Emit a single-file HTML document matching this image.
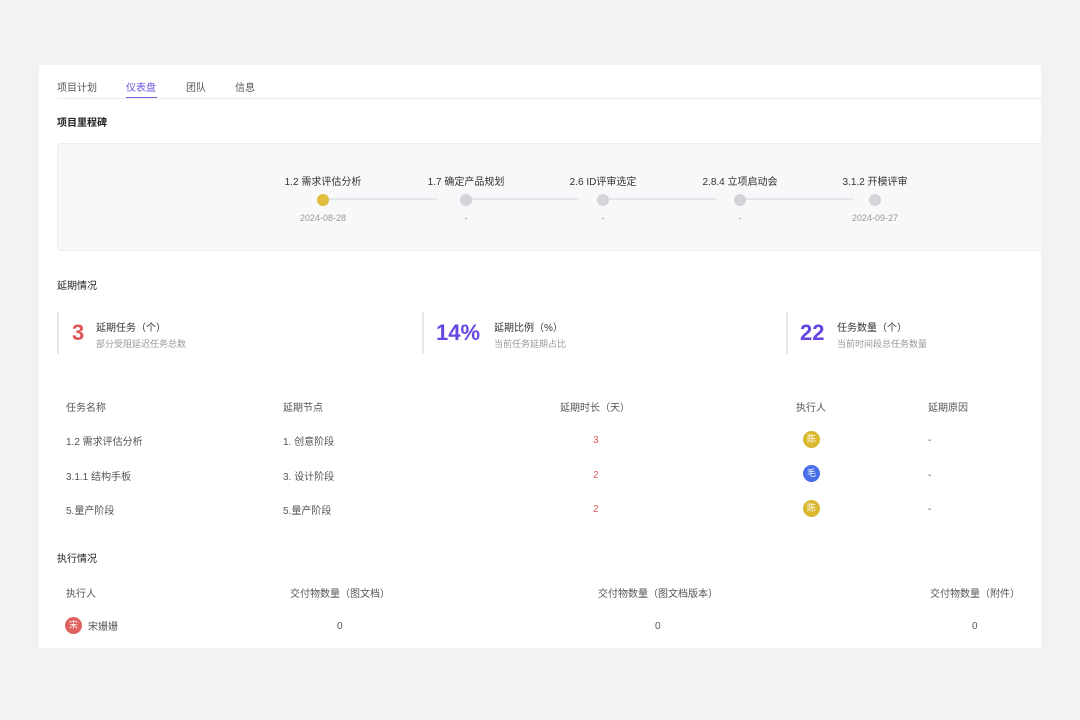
<!DOCTYPE html>
<html><head><meta charset="utf-8"><style>
*{margin:0;padding:0;box-sizing:border-box}
body{width:1080px;height:720px;background:#f2f2f4;font-family:"Liberation Sans","Noto Sans CJK SC",sans-serif;position:relative;overflow:hidden;color:#333}
.card{position:absolute;left:39px;top:65px;width:1002px;height:583px;background:#fff}
.a{position:absolute;white-space:nowrap}
.c{transform:translateX(-50%)}
.f11{font-size:11px}.f10{font-size:10px}.f9{font-size:9px}
.g{color:#999}.dk{color:#555}
.dot{position:absolute;width:12px;height:12px;border-radius:50%;background:#d4d4d8;top:194px}
.line{position:absolute;height:2px;background:#e6e6ea;top:198px}
.bar{position:absolute;width:2px;height:42px;background:#e8e8ec;top:312px}
.num{position:absolute;font-weight:bold;font-size:22px;top:320px}
.av{position:absolute;width:17px;height:17px;border-radius:50%;color:#fff;font-size:9px;text-align:center;line-height:17px}
</style></head><body>
<div class="card"></div>
<div class="a f10 dk" style="left:57px;top:79px">项目计划</div>
<div class="a f10" style="left:126px;top:79px;color:#6a55d8">仪表盘</div>
<div style="position:absolute;left:126px;top:97px;width:31px;height:2px;background:#7a66e0"></div>
<div class="a f10 dk" style="left:186px;top:79px">团队</div>
<div class="a f10 dk" style="left:235px;top:79px">信息</div>
<div style="position:absolute;left:57px;top:98px;width:984px;height:1px;background:#ececf0"></div>
<div class="a f10" style="left:57px;top:114px;font-weight:bold;color:#222">项目里程碑</div>
<div style="position:absolute;left:57px;top:143px;width:984px;height:108px;background:#f8f8fa;border:1px solid #ededf1;border-right:none;border-radius:4px 0 0 4px"></div>
<div class="line" style="left:329px;width:108px"></div>
<div class="line" style="left:472px;width:107px"></div>
<div class="line" style="left:609px;width:107px"></div>
<div class="line" style="left:746px;width:107px"></div>
<div class="dot" style="left:317px;background:#e0bd3c"></div>
<div class="dot" style="left:460px"></div>
<div class="dot" style="left:597px"></div>
<div class="dot" style="left:734px"></div>
<div class="dot" style="left:869px"></div>
<div class="a f10 c" style="left:323px;top:173px">1.2 需求评估分析</div>
<div class="a f10 c" style="left:466px;top:173px">1.7 确定产品规划</div>
<div class="a f10 c" style="left:603px;top:173px">2.6 ID评审选定</div>
<div class="a f10 c" style="left:740px;top:173px">2.8.4 立项启动会</div>
<div class="a f10 c" style="left:875px;top:173px">3.1.2 开模评审</div>
<div class="a f9 c g" style="left:323px;top:213px">2024-08-28</div>
<div class="a f9 c g" style="left:466px;top:213px">-</div>
<div class="a f9 c g" style="left:603px;top:213px">-</div>
<div class="a f9 c g" style="left:740px;top:213px">-</div>
<div class="a f9 c g" style="left:875px;top:213px">2024-09-27</div>
<div class="a f10" style="left:57px;top:277px;color:#222">延期情况</div>
<div class="bar" style="left:57px"></div><div class="bar" style="left:422px"></div><div class="bar" style="left:786px"></div>
<div class="num" style="left:72px;color:#e05555">3</div>
<div class="num" style="left:436px;color:#6645e0">14%</div>
<div class="num" style="left:800px;color:#6645e0">22</div>
<div class="a f10" style="left:96px;top:319px">延期任务（个）</div>
<div class="a f9 g" style="left:96px;top:337px">部分受阻延迟任务总数</div>
<div class="a f10" style="left:494px;top:319px">延期比例（%）</div>
<div class="a f9 g" style="left:494px;top:337px">当前任务延期占比</div>
<div class="a f10" style="left:837px;top:319px">任务数量（个）</div>
<div class="a f9 g" style="left:837px;top:337px">当前时间段总任务数量</div>
<div class="a f10 dk" style="left:66px;top:399px">任务名称</div>
<div class="a f10 dk" style="left:283px;top:399px">延期节点</div>
<div class="a f10 dk" style="left:560px;top:399px">延期时长（天）</div>
<div class="a f10 dk" style="left:796px;top:399px">执行人</div>
<div class="a f10 dk" style="left:928px;top:399px">延期原因</div>
<div class="a f10 dk" style="left:66px;top:433px">1.2 需求评估分析</div>
<div class="a f10 dk" style="left:283px;top:433px">1. 创意阶段</div>
<div class="a f10" style="left:593px;top:435px;color:#d55">3</div>
<div class="av" style="left:803px;top:431px;background:#d9b72e">陈</div>
<div class="a f10 dk" style="left:928px;top:435px">-</div>
<div class="a f10 dk" style="left:66px;top:468px">3.1.1 结构手板</div>
<div class="a f10 dk" style="left:283px;top:468px">3. 设计阶段</div>
<div class="a f10" style="left:593px;top:470px;color:#d55">2</div>
<div class="av" style="left:803px;top:465px;background:#4a6ee8">毛</div>
<div class="a f10 dk" style="left:928px;top:470px">-</div>
<div class="a f10 dk" style="left:66px;top:502px">5.量产阶段</div>
<div class="a f10 dk" style="left:283px;top:502px">5.量产阶段</div>
<div class="a f10" style="left:593px;top:504px;color:#d55">2</div>
<div class="av" style="left:803px;top:500px;background:#d9b72e">陈</div>
<div class="a f10 dk" style="left:928px;top:504px">-</div>
<div class="a f10" style="left:57px;top:550px;color:#222">执行情况</div>
<div class="a f10 dk" style="left:66px;top:585px">执行人</div>
<div class="a f10 dk" style="left:290px;top:585px">交付物数量（图文档）</div>
<div class="a f10 dk" style="left:598px;top:585px">交付物数量（图文档版本）</div>
<div class="a f10 dk" style="left:930px;top:585px">交付物数量（附件）</div>
<div class="av" style="left:65px;top:617px;background:#e06060">宋</div>
<div class="a f10 dk" style="left:88px;top:618px">宋姗姗</div>
<div class="a f10 dk" style="left:337px;top:621px">0</div>
<div class="a f10 dk" style="left:655px;top:621px">0</div>
<div class="a f10 dk" style="left:972px;top:621px">0</div>
</body></html>
